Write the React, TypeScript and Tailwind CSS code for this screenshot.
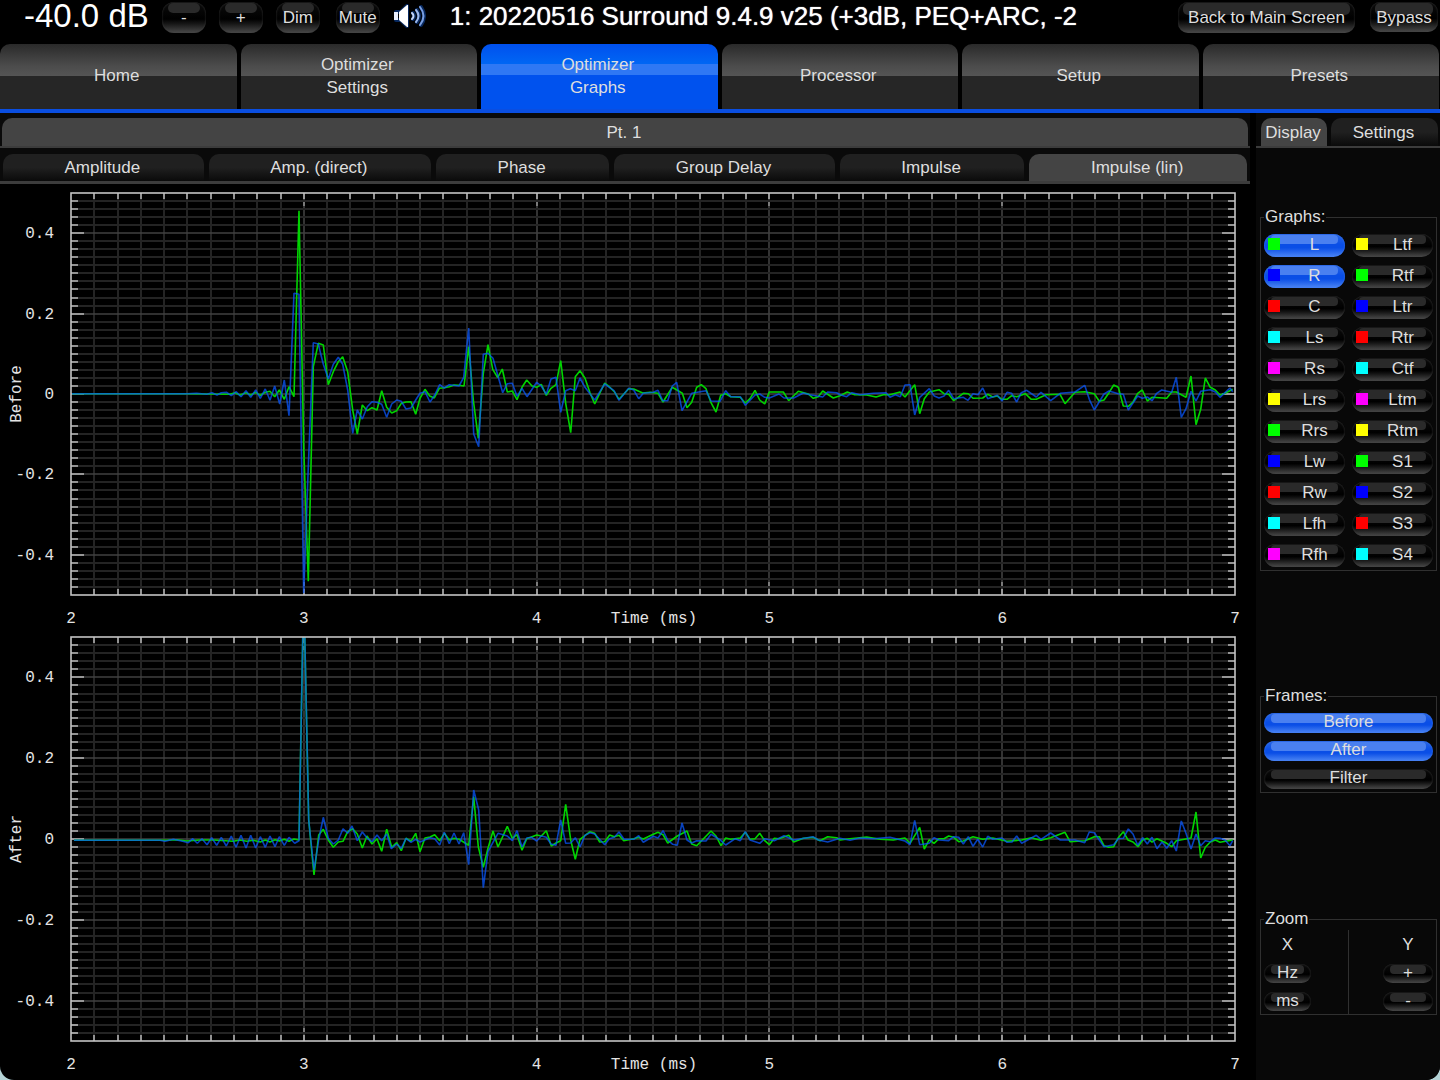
import type { ReactNode } from 'react';
import clsx from 'clsx';

type Section = { x: number; y: number; points: string };
type Chart = {
  name: string;
  top: number;
  height: number;
  plotTop: number;
  plotHeight: number;
  green: Section[];
  blue: Section[];
};

const PLOT_LEFT = 71;
const PLOT_WIDTH = 1164;

// Trace sections hold their points in thirds of a unit, relative to the section origin.
const beforeGreen: Section[] = [
  {
    x: 0,
    y: 180,
    points:
      '216,641 560,641 690,643 705,638 720,645 738,638 752,645 767,637 781,646 796,637 810,634 824,650 838,630 853,658 867,620 882,650 897,92 911,800 925,1204 940,560 955,490 970,495 985,614 1000,575 1015,545 1028,530 1043,575 1058,690 1072,762 1087,675 1102,692 1116,683 1131,690 1145,632 1160,682 1175,699 1190,692 1204,670 1218,666 1233,665 1247,703',
  },
  {
    x: 420,
    y: 300,
    points:
      '0,295 15,268 29,288 43,294 58,265 73,263 88,260 102,255 117,256 132,258 146,140 160,300 175,415 190,220 204,134 218,208 233,233 247,207 262,276 277,273 291,299 306,262 320,240 336,258 350,262 364,253 379,286 393,265 408,254 422,182 437,310 452,398 466,230 480,212 495,235 510,278 524,312 539,280 554,249 568,260 583,275 597,298 626,266 641,267 668,279 690,277 714,280 729,306 757,262 787,280 801,323 815,307 830,262 844,254 858,266 873,308 888,336 902,286 917,281 932,290 961,292 976,309 990,296 1005,271 1019,300 1034,312 1048,276 1090,276 1106,302 1135,274 1165,282 1180,295 1195,290 1208,273 1240,294',
  },
  {
    x: 840,
    y: 300,
    points:
      '0,287 22,276 44,284 80,285 108,291 130,284 150,284 180,276 195,291 224,254 239,341 253,296 268,276 297,269 312,281 326,283 341,302 370,280 385,281 399,295 428,294 443,283 458,291 472,288 486,298 501,298 515,287 530,290 556,281 574,298 589,298 618,284 660,283 675,311 705,277 735,275 763,281 778,304 792,300 807,278 821,255 835,262 850,318 865,319 879,306 893,280 907,270 922,303 936,292 980,295 995,276 1009,276 1038,292 1053,228 1068,374 1082,328 1096,234 1111,262 1126,270 1140,285 1155,280 1178,268',
  },
];

const beforeBlue: Section[] = [
  {
    x: 0,
    y: 180,
    points:
      '216,641 560,641 590,640 620,643 636,638 651,645 664,638 680,637 694,647 709,635 723,650 738,632 752,652 767,630 781,655 796,627 810,661 824,618 839,672 853,600 867,707 882,340 897,343 911,1240 925,860 940,488 955,492 970,553 985,597 1000,553 1015,532 1028,553 1043,630 1058,760 1072,690 1087,717 1102,680 1116,665 1131,667 1145,673 1160,712 1175,672 1190,660 1204,664 1218,687 1233,684 1247,660',
  },
  {
    x: 420,
    y: 300,
    points:
      '0,280 15,275 30,306 44,285 59,254 73,264 88,254 117,258 131,232 146,84 161,402 176,440 190,163 204,160 219,175 248,278 262,251 277,250 291,289 306,265 321,290 350,247 364,258 379,283 393,237 408,232 422,337 437,272 451,266 466,272 480,234 495,262 524,300 554,252 582,272 597,301 612,282 626,265 641,270 656,296 670,280 700,277 714,271 728,302 743,302 757,258 770,247 786,332 815,280 858,272 873,303 900,304 917,272 932,290 961,290 976,316 1005,285 1019,282 1034,292 1048,294 1077,282 1092,294 1121,294 1150,279 1170,284 1208,291 1223,276 1250,278',
  },
  {
    x: 840,
    y: 300,
    points:
      '0,284 20,290 36,278 60,284 100,280 138,278 150,292 166,284 181,290 195,255 210,254 224,345 239,292 268,266 283,288 297,294 312,288 326,271 341,296 370,292 384,301 399,281 414,284 428,264 443,296 472,286 486,303 501,277 515,280 530,306 544,278 560,271 589,291 603,277 632,302 661,280 705,276 734,256 748,298 763,330 792,282 807,273 835,281 850,283 865,330 893,288 907,295 922,291 936,302 950,280 965,270 995,277 1009,232 1024,352 1038,326 1053,274 1068,303 1082,274 1111,269 1126,276 1140,292 1155,278 1170,264 1178,275',
  },
];

const afterGreen: Section[] = [
  {
    x: 0,
    y: 620,
    points:
      '222,661 500,661 530,659 560,663 600,660 640,660 700,664 720,660 740,664 760,661 781,666 796,660 810,666 825,659 838,663 853,658 867,664 882,657 897,660 911,-100 926,600 942,765 956,645 970,628 985,660 1000,682 1015,666 1029,664 1043,635 1058,626 1072,642 1087,684 1101,648 1116,672 1131,656 1145,694 1160,628 1175,682 1190,668 1204,692 1218,655 1233,664 1247,640',
  },
  {
    x: 420,
    y: 750,
    points:
      '0,305 15,264 30,261 44,254 59,272 73,250 88,270 102,265 117,268 146,286 161,140 175,290 190,352 204,295 219,243 234,291 262,229 277,265 291,254 306,301 320,266 350,255 364,258 379,242 394,288 408,279 422,272 437,163 452,270 466,328 480,268 510,245 524,250 539,276 554,275 569,255 583,260 597,256 611,272 641,266 656,262 670,267 700,253 714,247 729,254 743,279 772,258 801,243 815,282 830,287 873,243 888,258 903,287 917,264 932,268 961,264 976,247 990,268 1005,266 1019,250 1034,272 1048,284 1063,265 1077,266 1106,256 1121,276 1150,265 1179,262 1200,272 1223,260 1250,263',
  },
  {
    x: 840,
    y: 750,
    points:
      '0,270 30,266 80,261 120,268 160,270 195,264 210,280 239,232 253,297 268,269 282,280 297,266 312,266 326,258 341,262 356,275 370,273 399,260 428,268 458,264 501,274 545,270 574,263 603,271 632,263 675,247 690,275 735,272 763,260 778,260 792,287 806,292 821,290 835,263 850,245 864,270 879,276 894,290 908,270 922,265 936,276 951,266 980,280 995,290 1009,272 1053,264 1068,186 1082,324 1096,292 1111,276 1126,270 1140,277 1178,270',
  },
];

const afterBlue: Section[] = [
  {
    x: 0,
    y: 620,
    points:
      '222,661 480,661 495,664 520,658 548,664 565,668 578,656 592,670 606,656 621,674 635,653 650,676 664,652 679,678 694,648 708,682 723,646 738,684 752,646 767,684 781,650 796,682 810,648 825,680 838,650 853,676 867,652 884,670 897,662 911,-100 926,600 942,750 956,660 970,592 985,655 1000,672 1015,660 1029,626 1043,640 1056,618 1072,662 1087,636 1102,655 1116,665 1131,645 1145,662 1160,642 1174,686 1190,672 1204,685 1218,655 1233,667 1247,658',
  },
  {
    x: 420,
    y: 750,
    points:
      '0,276 30,263 44,266 59,285 73,247 88,281 102,249 117,282 131,248 146,344 161,120 176,180 190,413 204,305 219,277 234,250 262,258 277,272 291,242 306,291 320,264 335,262 350,273 364,258 379,262 393,282 408,286 422,210 437,280 452,279 466,263 480,291 495,256 510,248 524,252 554,284 568,266 583,262 597,246 612,268 641,268 656,257 670,277 700,259 714,264 729,242 743,270 758,283 772,286 786,219 801,270 815,279 830,272 858,273 873,253 902,271 917,285 946,266 961,272 976,245 990,270 1019,280 1034,266 1063,272 1092,257 1121,270 1179,260 1195,270 1223,276 1250,268',
  },
  {
    x: 840,
    y: 750,
    points:
      '0,265 30,271 60,264 100,266 150,262 195,273 210,284 224,211 239,284 268,280 282,263 297,270 326,272 341,260 356,262 370,282 385,260 399,289 413,268 428,291 443,259 458,268 486,264 501,277 516,276 530,258 545,280 589,256 603,268 632,249 661,270 705,270 734,278 748,246 763,248 792,290 821,284 835,266 850,265 865,237 879,252 893,286 908,263 922,282 936,262 951,296 966,276 980,295 995,272 1009,303 1024,213 1038,250 1053,297 1068,252 1082,287 1096,272 1111,275 1126,264 1140,265 1155,270 1170,287 1178,272',
  },
];

const charts: Chart[] = [
  { name: 'Before', top: 184, height: 444, plotTop: 193, plotHeight: 402, green: beforeGreen, blue: beforeBlue },
  { name: 'After', top: 628, height: 452, plotTop: 637, plotHeight: 404, green: afterGreen, blue: afterBlue },
];

function tracePoints(sections: Section[]) {
  return sections
    .flatMap((s) =>
      s.points.split(' ').map((p) => {
        const [x, y] = p.split(',').map(Number);
        return `${(s.x + x / 3).toFixed(1)},${(s.y + y / 3).toFixed(1)}`;
      }),
    )
    .join(' ');
}

function ImpulseChart({ chart }: { chart: Chart }) {
  const { name, top, height, plotTop, plotHeight } = chart;
  const right = PLOT_LEFT + PLOT_WIDTH;
  const bottom = plotTop + plotHeight;
  const middle = plotTop + plotHeight / 2;
  const columns = Array.from({ length: 49 }, (_, i) => i + 1);
  const rows = Array.from({ length: 49 }, (_, i) => i - 24);
  const xAt = (i: number) => Math.round(PLOT_LEFT + (i * PLOT_WIDTH) / 50);
  const yAt = (i: number) => Math.round(middle - (i * plotHeight) / 50);

  return (
    <svg
      viewBox={`0 ${top} 1250 ${height}`}
      className="block h-auto w-full font-['Liberation_Mono',monospace] text-[16px]"
      role="img"
      aria-label={`${name}: impulse response`}
    >
      <defs>
        <clipPath id={`plot-${name}`}>
          <rect x={PLOT_LEFT} y={plotTop} width={PLOT_WIDTH} height={plotHeight} />
        </clipPath>
      </defs>
      {columns.map((i) => (
        <line key={i} x1={xAt(i)} x2={xAt(i)} y1={plotTop} y2={bottom} stroke={i % 10 ? '#242424' : '#404040'} strokeWidth={i % 10 ? 2 : 1.6} />
      ))}
      {rows.map((i) => (
        <line key={i} x1={PLOT_LEFT} x2={right} y1={yAt(i)} y2={yAt(i)} stroke={i % 10 ? '#242424' : '#404040'} strokeWidth={i % 10 ? 2 : 1.6} />
      ))}
      <g stroke="#c4c4c4" strokeWidth="1.4">
        {columns.map((i) => (
          <g key={i}>
            <line x1={xAt(i)} x2={xAt(i)} y1={plotTop} y2={plotTop + 6} />
            <line x1={xAt(i)} x2={xAt(i)} y1={bottom - 6} y2={bottom} />
            {i % 10 === 0 && (
              <>
                <line x1={xAt(i)} x2={xAt(i)} y1={plotTop + 9} y2={plotTop + 13} stroke="#999" />
                <line x1={xAt(i)} x2={xAt(i)} y1={bottom - 13} y2={bottom - 9} stroke="#999" />
              </>
            )}
          </g>
        ))}
        {rows.map((i) => (
          <g key={i}>
            <line x1={PLOT_LEFT} x2={PLOT_LEFT + (i % 10 ? 7 : 13)} y1={yAt(i)} y2={yAt(i)} />
            <line x1={right - (i % 10 ? 7 : 13)} x2={right} y1={yAt(i)} y2={yAt(i)} />
          </g>
        ))}
      </g>
      <g clipPath={`url(#plot-${name})`} fill="none" strokeWidth="1.6" strokeLinejoin="bevel">
        <polyline points={tracePoints(chart.green)} stroke="#00d400" />
        <polyline points={tracePoints(chart.blue)} stroke="#0a58ff" strokeOpacity="0.74" />
      </g>
      <rect x={PLOT_LEFT} y={plotTop} width={PLOT_WIDTH} height={plotHeight} fill="none" stroke="#c4c4c4" strokeWidth="1.6" />
      <g fill="#e4e4e4">
        {[20, 10, 0, -10, -20].map((i) => (
          <text key={i} x="54" y={yAt(i) + 5} textAnchor="end">
            {i / 50}
          </text>
        ))}
        {[2, 3, 4, 5, 6, 7].map((ms) => (
          <text key={ms} x={PLOT_LEFT + ((ms - 2) * PLOT_WIDTH) / 5} y={bottom + 28} textAnchor="middle">
            {ms}
          </text>
        ))}
        <text x="654" y={bottom + 28} textAnchor="middle">
          Time (ms)
        </text>
        <text x="0" y="0" textAnchor="middle" transform={`translate(21 ${middle}) rotate(-90)`}>
          {name}
        </text>
      </g>
    </svg>
  );
}

function GlossButton({ on, className, label, pressed, children }: { on?: boolean; className?: string; label?: string; pressed?: boolean; children: ReactNode }) {
  return (
    <button
      type="button"
      aria-label={label}
      aria-pressed={pressed}
      className={clsx(
        'relative isolate flex items-center justify-center whitespace-nowrap leading-none text-[#dedede]',
        "before:absolute before:-z-10 before:content-['']",
        on
          ? 'bg-[linear-gradient(180deg,#2a66e4_0%,#0a4ee6_45%,#0a4ee6_60%,#4d86f4_100%)] shadow-[inset_0_0_2px_#3b78ee] before:bg-[#4a80f0]'
          : 'bg-[linear-gradient(180deg,#0c0c0c_0%,#000_55%,#161616_70%,#4a4a4a_100%)] shadow-[inset_0_0_2px_#3c3c3c] before:bg-[#2a2a2a]',
        className,
      )}
    >
      {children}
    </button>
  );
}

const mainTabs = [['Home'], ['Optimizer', 'Settings'], ['Optimizer', 'Graphs'], ['Processor'], ['Setup'], ['Presets']];
const graphTabs = ['Amplitude', 'Amp. (direct)', 'Phase', 'Group Delay', 'Impulse', 'Impulse (lin)'];

const green = 'bg-[#00ff00]';
const yellow = 'bg-[#ffff00]';
const blue = 'bg-[#0000ff]';
const red = 'bg-[#ff0000]';
const cyan = 'bg-[#00ffff]';
const magenta = 'bg-[#ff00ff]';

const channels: [string, string][] = [
  ['L', green], ['Ltf', yellow],
  ['R', blue], ['Rtf', green],
  ['C', red], ['Ltr', blue],
  ['Ls', cyan], ['Rtr', red],
  ['Rs', magenta], ['Ctf', cyan],
  ['Lrs', yellow], ['Ltm', magenta],
  ['Rrs', green], ['Rtm', yellow],
  ['Lw', blue], ['S1', green],
  ['Rw', red], ['S2', blue],
  ['Lfh', cyan], ['S3', red],
  ['Rfh', magenta], ['S4', cyan],
];

function Speaker() {
  return (
    <svg viewBox="0 0 34 26" className="h-[26px] w-[34px]" aria-label="Sound on" role="img">
      <g fill="none" stroke="#0b3a86" strokeWidth="4" strokeLinecap="round" strokeLinejoin="round" opacity="0.7">
        <path d="M3 9h5l6-6v20l-6-6H3z" />
        <path d="M20 10q2 3 0 6M24 7q4 6 0 12M28 4q6 9 0 18" />
      </g>
      <path d="M1 9h4v8H1z" fill="#e8efff" />
      <path d="M6 9l8-7h1v22h-1l-8-7z" fill="#fff" />
      <g fill="none" strokeWidth="2" strokeLinecap="round">
        <path d="M19 10q3 3 0 6" stroke="#c4d6f8" />
        <path d="M23 7q5 6 0 12" stroke="#9db9ec" />
        <path d="M27 4q7 9 0 18" stroke="#7b9fe0" />
      </g>
    </svg>
  );
}

const headerButton = 'h-[31px] w-[44px] shrink-0 rounded-[12px] before:inset-x-[6px] before:top-[1px] before:h-[10px] before:rounded-[5px]';
const pill = 'before:inset-x-[7px] before:top-[1px] before:h-[9px] before:rounded-[4px]';

function Header() {
  return (
    <header className="flex h-[43px] items-start whitespace-nowrap pl-6 text-white">
      <output className="shrink-0 text-[33px] leading-[32px]">-40.0 dB</output>
      <div className="ml-[13px] mt-[2px] flex gap-[13px]">
        <GlossButton className={headerButton} label="Volume down">-</GlossButton>
        <GlossButton className={headerButton} label="Volume up">+</GlossButton>
        <GlossButton className={headerButton}>Dim</GlossButton>
        <GlossButton className={clsx(headerButton, 'ml-[3px]')}>Mute</GlossButton>
      </div>
      <div className="ml-[13px] mt-[3px] shrink-0">
        <Speaker />
      </div>
      <h1 className="ml-[23px] min-w-0 grow overflow-hidden text-[26px] leading-[33px] [text-shadow:0_0_1px_#fff]">
        1: 20220516 Surround 9.4.9 v25 (+3dB, PEQ+ARC, -2
      </h1>
      <GlossButton className="mt-[2px] h-[31px] w-[177px] shrink-0 rounded-[10px] before:inset-x-[5px] before:top-[1px] before:h-[12px] before:rounded-[5px]">
        Back to Main Screen
      </GlossButton>
      <GlossButton className="ml-[15px] mr-[2px] mt-[2px] h-[30px] w-[68px] shrink-0 rounded-[10px] before:inset-x-[5px] before:top-[1px] before:h-[12px] before:rounded-[5px]">
        Bypass
      </GlossButton>
    </header>
  );
}

const fieldset = 'min-w-0 border border-[#303030] px-[3px]';
const legend = 'px-[1px] text-[17px] leading-[20px]';

export default function App() {
  return (
    <div className="bg-[#b4d3d6]">
      <div className="overflow-hidden rounded-b-[14px] bg-black font-['Liberation_Sans',Arial,sans-serif] text-[17px] text-[#dedede]">
        <Header />
        <nav className="mt-[1px] grid grid-cols-6 gap-x-1 border-b-4 border-[#0a4ee0] pr-px">
          {mainTabs.map((lines, i) => (
            <button
              key={lines.join(' ')}
              type="button"
              aria-current={i === 2 ? 'page' : undefined}
              className={clsx(
                'flex h-[65px] flex-col items-center justify-center rounded-t-[10px] pb-[2px] pr-[3px] leading-[23px]',
                i === 2
                  ? 'bg-[linear-gradient(180deg,#0050ee_0%,#0066f4_30%,#2f78f4_31%,#2f78f4_47%,#0052ee_48%)]'
                  : 'bg-[linear-gradient(180deg,#2a2a2a_0%,#4c4c4c_34%,#545454_49%,#262626_50%)]',
              )}
            >
              {lines.map((line) => (
                <span key={line}>{line}</span>
              ))}
            </button>
          ))}
        </nav>
        <div className="flex items-stretch">
          <main className="mr-[6px] min-w-0 flex-1">
            <div className="bg-[#0a0a0a]">
              <div className="border-b-2 border-[#3c3c3c] px-[2px] pt-[5px]">
                <button type="button" className="block h-[28px] w-full rounded-t-[10px] bg-[#444] pr-[2px] leading-[29px]">
                  Pt. 1
                </button>
              </div>
              <div className="flex gap-[5px] border-b-[3px] border-[#3c3c3c] px-[3px] pt-[6px]">
                {graphTabs.map((tab, i) => (
                  <button
                    key={tab}
                    type="button"
                    aria-pressed={i === 5}
                    className={clsx(
                      'h-[27px] grow whitespace-nowrap rounded-t-[10px] pr-[2px] leading-[27px]',
                      i === 5 ? 'bg-[#444]' : 'bg-[linear-gradient(180deg,#202020_50%,#0a0a0a)]',
                    )}
                  >
                    {tab}
                  </button>
                ))}
              </div>
            </div>
            {charts.map((chart) => (
              <ImpulseChart key={chart.name} chart={chart} />
            ))}
          </main>
          <aside className="w-[184px] shrink-0 bg-[#080808]">
            <div className="flex gap-1 border-b-2 border-[#3c3c3c] pl-[5px] pr-[2px] pt-[5px]">
              <button type="button" aria-pressed className="h-[28px] w-[66px] rounded-t-[10px] bg-[#444] pr-[2px] leading-[29px]">
                Display
              </button>
              <button type="button" className="h-[28px] grow rounded-t-[10px] bg-[linear-gradient(180deg,#202020_50%,#0a0a0a)] pr-[2px] leading-[29px]">
                Settings
              </button>
            </div>
            <div className="pl-1 pr-[3px] pt-[59px]">
              <fieldset className={clsx(fieldset, 'pb-[3px]')}>
                <legend className={legend}>Graphs:</legend>
                <div className="grid grid-cols-2 gap-x-[7px] gap-y-2 pt-[7px]">
                  {channels.map(([name, swatch], i) => {
                    const on = i === 0 || i === 2;
                    return (
                      <GlossButton key={name} on={on} pressed={on} className={clsx('h-[23px] rounded-full pb-[3px] pl-[4px]', pill)}>
                        <span className={clsx('size-[12px] shrink-0', swatch)} />
                        <span className="grow pl-[4px]">{name}</span>
                      </GlossButton>
                    );
                  })}
                </div>
              </fieldset>
              <fieldset className={clsx(fieldset, 'mt-[115px] pb-[3px]')}>
                <legend className={legend}>Frames:</legend>
                <div className="grid gap-[8px] pt-[7px]">
                  {['Before', 'After', 'Filter'].map((name, i) => (
                    <GlossButton key={name} on={i < 2} pressed={i < 2} className={clsx('h-[20px] rounded-full pb-[3px]', pill)}>
                      {name}
                    </GlossButton>
                  ))}
                </div>
              </fieldset>
              <fieldset className={clsx(fieldset, 'mt-[116px]')}>
                <legend className={legend}>Zoom</legend>
                <div className="grid grid-cols-2 pt-[1px]">
                  <div className="flex flex-col items-start gap-[9px] border-r border-[#303030] pb-[3px]">
                    <span className="mt-[4px] w-[47px] text-center leading-[21px]">X</span>
                    <GlossButton className={clsx('h-[19px] w-[47px] rounded-full pb-[2px]', pill)}>Hz</GlossButton>
                    <GlossButton className={clsx('h-[19px] w-[47px] rounded-full pb-[3px]', pill)}>ms</GlossButton>
                  </div>
                  <div className="flex flex-col items-end gap-[9px] pb-[3px]">
                    <span className="mt-[4px] w-[50px] text-center leading-[21px]">Y</span>
                    <GlossButton className={clsx('h-[19px] w-[50px] rounded-full pb-[2px]', pill)} label="Zoom in">+</GlossButton>
                    <GlossButton className={clsx('h-[19px] w-[50px] rounded-full pb-[3px]', pill)} label="Zoom out">-</GlossButton>
                  </div>
                </div>
              </fieldset>
            </div>
          </aside>
        </div>
      </div>
    </div>
  );
}
